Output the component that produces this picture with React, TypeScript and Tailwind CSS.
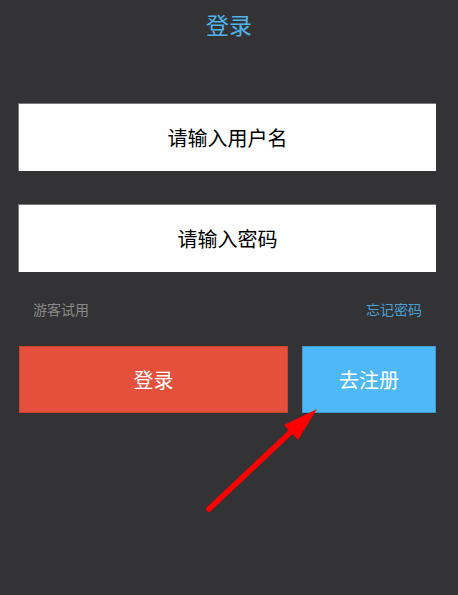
const font = { fontFamily: '"Noto Sans CJK SC", "Noto Sans", sans-serif' };

function Field({ placeholder }: { placeholder: string }) {
  return (
    <div className="flex h-[68px] items-center justify-center border-t border-l border-[#7a7a7a] bg-white">
      <span className="text-[20px] leading-none text-black">{placeholder}</span>
    </div>
  );
}

export default function App() {
  return (
    <div className="relative h-[595px] w-[458px] overflow-hidden bg-[#333335]" style={font}>
      <header className="flex h-[48px] items-center justify-center">
        <h1 className="text-[23px] leading-none text-[#4fb3ee]">登录</h1>
      </header>

      <div className="mt-[55px] flex flex-col gap-[33px] pl-[18px] pr-[22px]">
        <Field placeholder="请输入用户名" />
        <Field placeholder="请输入密码" />
      </div>

      <div className="mt-[30px] flex items-center justify-between pl-[33px] pr-[36px] text-[14px] leading-none">
        <span className="text-[#8a8a8a]">游客试用</span>
        <span className="text-[#4a9fd3]">忘记密码</span>
      </div>

      <div className="mt-[30px] flex gap-[14px] pl-[19px] pr-[22px]">
        <button className="flex h-[67px] w-[269px] items-center justify-center border border-[#c9442f] bg-[#e4503b] text-[20px] text-white">
          登录
        </button>
        <button className="flex h-[67px] flex-1 items-center justify-center border border-[#3f9ad0] bg-[#4fb8f8] text-[20px] text-white">
          去注册
        </button>
      </div>

      <svg className="pointer-events-none absolute left-0 top-0" width="458" height="595" viewBox="0 0 458 595">
        <line x1="209" y1="509" x2="294" y2="429" stroke="#ff0000" strokeWidth="5.5" strokeLinecap="round" />
        <polygon points="317,409 284,425 298,440" fill="#ff0000" />
      </svg>
    </div>
  );
}
